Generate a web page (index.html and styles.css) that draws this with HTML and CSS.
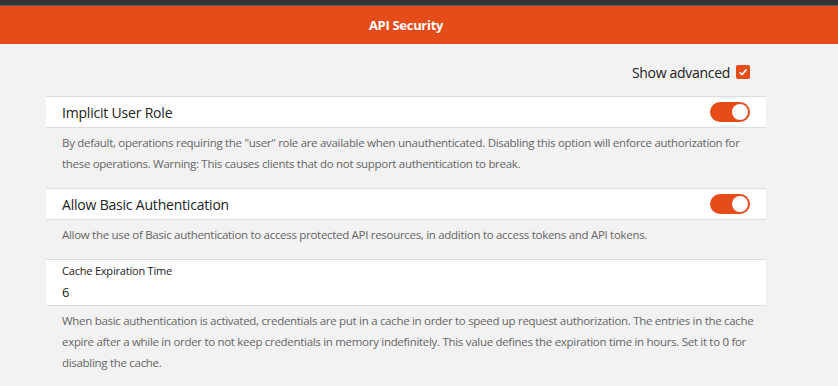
FILE: index.html
```html
<!DOCTYPE html>
<html>
<head>
  <title>API Security</title>
  <link rel="stylesheet" href="styles.css">
</head>
<body>
  <div class="topbar"></div>
  <div class="header">
    <div class="header-inner">API Security</div>
  </div>

  <div class="content">
    <div class="advanced">
      <label for="showAdvanced">Show advanced</label>
      <span class="checkbox" id="showAdvanced">
        <svg width="10" height="10" viewBox="0 0 10 10"><path d="M1.5 5.2 L4 7.6 L8.6 2.4" fill="none" stroke="#fff" stroke-width="1.6"/></svg>
      </span>
    </div>

    <div class="section">
      <div class="row">
        <span class="row-title">Implicit User Role</span>
        <span class="toggle on"><span class="knob"></span></span>
      </div>
      <p class="desc">By default, operations requiring the "user" role are available when unauthenticated. Disabling this option will enforce authorization for these operations. Warning: This causes clients that do not support authentication to break.</p>
    </div>

    <div class="section">
      <div class="row">
        <span class="row-title">Allow Basic Authentication</span>
        <span class="toggle on"><span class="knob"></span></span>
      </div>
      <p class="desc">Allow the use of Basic authentication to access protected API resources, in addition to access tokens and API tokens.</p>
    </div>

    <div class="section">
      <div class="field">
        <label for="cacheTime">Cache Expiration Time</label>
        <input type="text" id="cacheTime" value="6">
      </div>
      <p class="desc">When basic authentication is activated, credentials are put in a cache in order to speed up request authorization. The entries in the cache expire after a while in order to not keep credentials in memory indefinitely. This value defines the expiration time in hours. Set it to 0 for disabling the cache.</p>
    </div>
  </div>
</body>
</html>
```

FILE: styles.css
```css
body {
  margin: 0;
  background-color: #f2f2f2;
  font-family: "Open Sans", "Noto Sans", sans-serif;
  color: #222;
}

.topbar {
  height: 5px;
  background-color: #333437;
  border-bottom: 1px solid #5b5b5b;
}

.header {
  background-color: #e64b1a;
  height: 38px;
}

.header-inner {
  width: 720px;
  margin-left: 46px;
  text-align: center;
  color: #fff;
  font-weight: 700;
  font-size: 13px;
  line-height: 38px;
  letter-spacing: -0.3px;
}

.content {
  width: 720px;
  margin-left: 46px;
}

.advanced {
  display: flex;
  justify-content: flex-end;
  align-items: center;
  gap: 6px;
  padding: 16px 16px 0;
  height: 24px;
  margin-bottom: 12px;
  font-size: 14px;
  letter-spacing: -0.3px;
}

.checkbox {
  width: 14px;
  height: 14px;
  border-radius: 2px;
  background-color: #e64b1a;
  display: flex;
  align-items: center;
  justify-content: center;
}

.section {
  margin-bottom: 14px;
}

.row {
  display: flex;
  justify-content: space-between;
  align-items: center;
  height: 30px;
  padding: 0 16px;
  background-color: #fff;
  border-top: 1px solid #dddddd;
  border-bottom: 1px solid #dddddd;
}

.row-title {
  font-size: 14px;
  letter-spacing: -0.2px;
}

.toggle {
  width: 40px;
  height: 20px;
  border-radius: 10px;
  background-color: #e64b1a;
  position: relative;
}

.toggle .knob {
  position: absolute;
  right: 2px;
  top: 2px;
  width: 16px;
  height: 16px;
  border-radius: 50%;
  background-color: #fff;
}

.field {
  background-color: #fff;
  border-top: 1px solid #dddddd;
  border-bottom: 1px solid #dddddd;
  padding: 1px 16px 2px;
}

.field label {
  display: block;
  font-size: 11px;
  line-height: 20px;
  letter-spacing: -0.2px;
}

.field input {
  display: block;
  width: 100%;
  border: none;
  padding: 0;
  margin: 0;
  font-family: inherit;
  font-size: 13px;
  line-height: 22px;
  height: 22px;
  color: #222;
  outline: none;
}

.desc {
  margin: 0;
  padding: 4px 0 0 16px;
  font-size: 11.5px;
  line-height: 21px;
  color: #666;
  letter-spacing: -0.3px;
}
```
